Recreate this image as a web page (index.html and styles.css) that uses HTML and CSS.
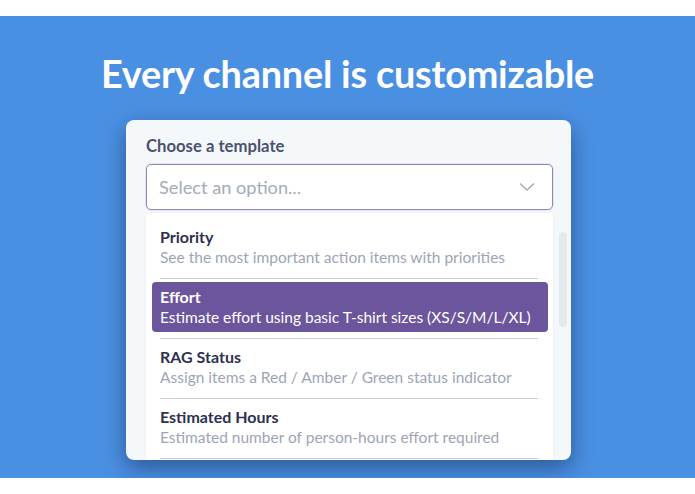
FILE: index.html
```html
<!DOCTYPE html>
<html>
<head>
<meta charset="utf-8">
<link rel="stylesheet" href="styles.css">
</head>
<body>
<div class="top"></div>
<section class="hero">
  <h1 class="title">Every channel is customizable</h1>
  <div class="card">
    <div class="label">Choose a template</div>
    <div class="select">
      <span class="placeholder">Select an option...</span>
      <svg class="chev" width="16" height="10" viewBox="0 0 16 10"><path d="M1 1.5 L8 8 L15 1.5" fill="none" stroke="#a3a9b8" stroke-width="1.4"/></svg>
    </div>
    <div class="dropdown">
      <div class="list">
        <div class="item"><div class="it">Priority</div><div class="id">See the most important action items with priorities</div></div>
        <div class="sep"></div>
        <div class="item active"><div class="it">Effort</div><div class="id">Estimate effort using basic T-shirt sizes (XS/S/M/L/XL)</div></div>
        <div class="sep"></div>
        <div class="item"><div class="it">RAG Status</div><div class="id">Assign items a Red / Amber / Green status indicator</div></div>
        <div class="sep"></div>
        <div class="item"><div class="it">Estimated Hours</div><div class="id">Estimated number of person-hours effort required</div></div>
        <div class="sep"></div>
      </div>
      <div class="track"><div class="thumb"></div></div>
    </div>
  </div>
</section>
</body>
</html>
```

FILE: styles.css
```css
html, body { margin: 0; padding: 0; background: #ffffff; }
body { font-family: Lato, "Open Sans", sans-serif; }
.top { height: 16px; background: #ffffff; }
.hero {
  height: 462px;
  background: #4a90e2;
  display: flex;
  flex-direction: column;
  align-items: center;
  overflow: hidden;
}
.title {
  margin: 35px 0 0 0;
  font-size: 37.8px;
  line-height: 46px;
  font-weight: 700;
  color: #ffffff;
  letter-spacing: -0.2px;
}
.card {
  margin-top: 23px;
  margin-left: 2px;
  width: 445px;
  height: 340px;
  box-sizing: border-box;
  padding: 16px 4px 0 20px;
  background: #f5f8fb;
  border-radius: 8px;
  box-shadow: 0 8px 22px rgba(10, 20, 60, 0.45);
  overflow: hidden;
}
.label {
  font-size: 16.7px;
  font-weight: 700;
  color: #4b5270;
  line-height: 20px;
  margin-bottom: 8px;
}
.select {
  width: 407px;
  height: 46px;
  box-sizing: border-box;
  border: 1.5px solid #8e86bb;
  border-radius: 5px;
  background: #ffffff;
  display: flex;
  align-items: center;
  justify-content: space-between;
  padding: 0 17px 0 12px;
  box-shadow: 0 0 0 1px rgba(142, 134, 187, 0.15);
}
.placeholder {
  font-size: 18.2px;
  color: #a3abbb;
}
.chev { display: block; }
.dropdown {
  display: flex;
  margin-top: 3px;
}
.list {
  width: 407px;
  flex-shrink: 0;
  background: #ffffff;
  box-sizing: border-box;
  padding: 9px 5px 0 6px;
  border-radius: 4px;
  box-shadow: 0 0 3px rgba(0, 0, 0, 0.06);
}
.item {
  height: 50px;
  box-sizing: border-box;
  padding: 5px 8px 0 8px;
  border-radius: 4px;
  margin-bottom: 6px;
}
.item.active { background: #6b559d; }
.it {
  font-size: 16px;
  font-weight: 700;
  color: #2e3050;
  line-height: 19px;
}
.id {
  font-size: 15.5px;
  color: #9ca5b6;
  line-height: 22px;
}
.item.active .it, .item.active .id { color: #ffffff; }
.sep {
  height: 1px;
  background: #c9cfd8;
  margin: 0 10px 3px 8px;
}
.track {
  margin-left: 6px;
  width: 8px;
  padding-top: 19px;
}
.thumb {
  width: 8px;
  height: 95px;
  border-radius: 4px;
  background: #e5e8ed;
}
```
